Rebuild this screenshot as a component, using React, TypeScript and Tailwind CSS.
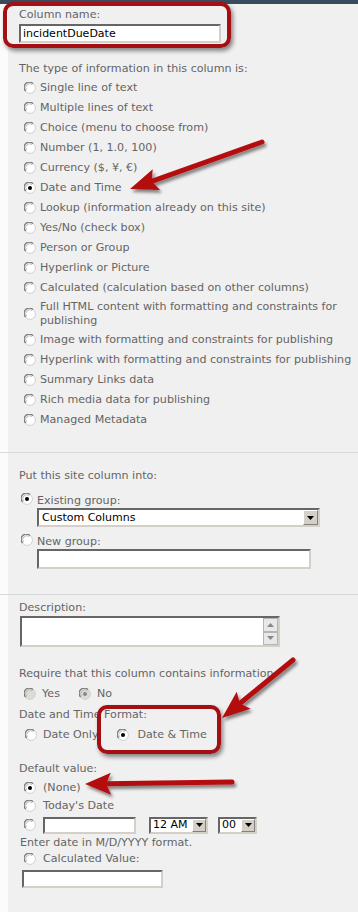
import type { ReactNode } from "react";

const font = "font-['DejaVu_Sans',Verdana,sans-serif]";

function Radio({ checked = false, disabled = false }: { checked?: boolean; disabled?: boolean }) {
  return (
    <svg width="12" height="12" viewBox="0 0 12 12" className="shrink-0">
      <circle cx="6" cy="6" r="5.4" fill={disabled ? "#dddbd6" : "#ffffff"} stroke="#d0d0d0" strokeWidth="1" />
      <path d="M1.6 9 A5 5 0 0 1 9 1.6" stroke="#7c7c7c" strokeWidth="1.3" fill="none" />
      <path d="M2.6 8.2 A4 4 0 0 1 8.2 2.6" stroke="#b8b8b8" strokeWidth="0.9" fill="none" />
      {checked && <circle cx="6" cy="6" r="2" fill={disabled ? "#8a8a8a" : "#000"} />}
    </svg>
  );
}

function DropButton({ className = "" }: { className?: string }) {
  return (
    <div
      className={`flex items-center justify-center bg-[#d4d0c8] border border-t-white border-l-white border-b-[#808080] border-r-[#808080] ${className}`}
    >
      <svg width="7" height="4" viewBox="0 0 7 4">
        <path d="M0 0 H7 L3.5 4 Z" fill="#000" />
      </svg>
    </div>
  );
}

function TextBox({ className = "", children }: { className?: string; children?: ReactNode }) {
  return (
    <div
      className={`bg-white border-2 border-t-[#666] border-l-[#666] border-b-[#d4d0c8] border-r-[#d4d0c8] text-black ${className}`}
    >
      {children}
    </div>
  );
}

const types = [
  "Single line of text",
  "Multiple lines of text",
  "Choice (menu to choose from)",
  "Number (1, 1.0, 100)",
  "Currency ($, ¥, €)",
  "Date and Time",
  "Lookup (information already on this site)",
  "Yes/No (check box)",
  "Person or Group",
  "Hyperlink or Picture",
  "Calculated (calculation based on other columns)",
];

const types2 = [
  "Image with formatting and constraints for publishing",
  "Hyperlink with formatting and constraints for publishing",
  "Summary Links data",
  "Rich media data for publishing",
  "Managed Metadata",
];

type Pt = [number, number];

function Arrow({ tail, tip, len = 28, half = 11 }: { tail: Pt; tip: Pt; len?: number; half?: number }) {
  const dx = tip[0] - tail[0];
  const dy = tip[1] - tail[1];
  const d = Math.hypot(dx, dy);
  const ux = dx / d;
  const uy = dy / d;
  const nx = -uy;
  const ny = ux;
  const bx = tip[0] - ux * len;
  const by = tip[1] - uy * len;
  const nbx = tip[0] - ux * (len - 5);
  const nby = tip[1] - uy * (len - 5);
  const head = `${tip[0]},${tip[1]} ${bx + nx * half},${by + ny * half} ${nbx},${nby} ${bx - nx * half},${by - ny * half}`;
  return (
    <g filter="url(#shadow)">
      <line x1={tail[0]} y1={tail[1]} x2={nbx} y2={nby} stroke="#b30c10" strokeWidth="5" strokeLinecap="round" />
      <polygon points={head} fill="#b30c10" />
    </g>
  );
}

export default function App() {
  return (
    <div className={`relative w-[358px] h-[912px] overflow-hidden bg-[#fbfbfb] text-[11.1px] leading-[14px] text-[#646464] ${font}`}>
      <div className="h-[4px] bg-[#3b4b5f]" />

      {/* column name + type */}
      <section className="ml-[8px] h-[448px] bg-[#f0f0f0] pl-[11px] pt-[4px]">
        <div>Column name:</div>
        <TextBox className="mt-[2px] w-[202px] h-[19px] pl-[2px] flex items-center text-[11px]">incidentDueDate</TextBox>
        <div className="mt-[19px]">The type of information in this column is:</div>
        <div className="mt-[2px]">
          {types.map((t) => (
            <div key={t} className="flex items-center h-[20px] pl-[5px] gap-[4px]">
              <Radio checked={t === "Date and Time"} />
              <span>{t}</span>
            </div>
          ))}
          <div className="flex items-center h-[32px] pl-[5px] gap-[4px]">
            <Radio />
            <span>
              Full HTML content with formatting and constraints for
              <br />
              publishing
            </span>
          </div>
          {types2.map((t) => (
            <div key={t} className="flex items-center h-[20px] pl-[5px] gap-[4px] whitespace-nowrap">
              <Radio />
              <span>{t}</span>
            </div>
          ))}
        </div>
      </section>

      <div className="h-px bg-[#d9d9d9]" />

      {/* group */}
      <section className="ml-[8px] h-[141px] bg-[#f0f0f0] pl-[11px] pt-[16px]">
        <div>Put this site column into:</div>
        <div className="mt-[7px] flex items-center h-[18px] pl-[2px] gap-[4px]">
          <Radio checked />
          <span className="mt-[3px]">Existing group:</span>
        </div>
        <div className="ml-[18px] w-[283px] h-[19px] flex items-center bg-white border-2 border-t-[#666] border-l-[#666] border-b-[#d4d0c8] border-r-[#d4d0c8] text-black text-[11px]">
          <span className="flex-1 pl-[3px]">Custom Columns</span>
          <DropButton className="w-[15px] h-[15px]" />
        </div>
        <div className="mt-[4px] flex items-center h-[18px] pl-[2px] gap-[4px]">
          <Radio />
          <span className="mt-[3px]">New group:</span>
        </div>
        <TextBox className="ml-[18px] w-[274px] h-[20px]" />
      </section>

      <div className="h-px bg-[#d9d9d9]" />

      {/* description + settings */}
      <section className="ml-[8px] h-[317px] bg-[#f0f0f0] pl-[11px] pt-[6px]">
        <div>Description:</div>
        <div className="mt-[1px] ml-[1px] w-[260px] h-[31px] flex bg-white border-2 border-t-[#666] border-l-[#666] border-b-[#d4d0c8] border-r-[#d4d0c8]">
          <div className="flex-1" />
          <div className="w-[15px] flex flex-col bg-[#eeeeee]">
            <div className="flex-1 flex items-center justify-center bg-[#e8e8e8] border border-[#b5b5b5]">
              <svg width="7" height="4" viewBox="0 0 7 4">
                <path d="M0 4 H7 L3.5 0 Z" fill="#888" />
              </svg>
            </div>
            <div className="flex-1 flex items-center justify-center bg-[#e8e8e8] border border-[#b5b5b5]">
              <svg width="7" height="4" viewBox="0 0 7 4">
                <path d="M0 0 H7 L3.5 4 Z" fill="#888" />
              </svg>
            </div>
          </div>
        </div>

        <div className="mt-[20px] whitespace-nowrap">Require that this column contains information:</div>
        <div className="mt-[3px] h-[20px] flex items-center pl-[5px]">
          <Radio disabled />
          <span className="ml-[6px]">Yes</span>
          <span className="ml-[19px]">
            <Radio checked disabled />
          </span>
          <span className="ml-[6px]">No</span>
        </div>

        <div className="mt-[4px]">Date and Time Format:</div>
        <div className="mt-[3px] h-[20px] flex items-center pl-[6px]">
          <Radio />
          <span className="ml-[6px]">Date Only</span>
          <span className="ml-[19px]">
            <Radio checked />
          </span>
          <span className="ml-[8px]">Date &amp; Time</span>
        </div>

        <div className="mt-[17px]">Default value:</div>
        <div className="mt-[3px] h-[18px] flex items-center pl-[5px] gap-[7px]">
          <Radio checked />
          <span>(None)</span>
        </div>
        <div className="h-[18px] flex items-center pl-[5px] gap-[7px]">
          <Radio />
          <span>Today's Date</span>
        </div>
        <div className="h-[20px] flex items-center pl-[5px]">
          <Radio />
          <TextBox className="ml-[7px] w-[93px] h-[17px]" />
          <div className="ml-[13px] w-[59px] h-[17px] flex items-center bg-white border-2 border-t-[#666] border-l-[#666] border-b-[#d4d0c8] border-r-[#d4d0c8] text-black text-[11px]">
            <span className="flex-1 pl-[2px]">12 AM</span>
            <DropButton className="w-[14px] h-[13px]" />
          </div>
          <div className="ml-[10px] w-[39px] h-[17px] flex items-center bg-white border-2 border-t-[#666] border-l-[#666] border-b-[#d4d0c8] border-r-[#d4d0c8] text-black text-[11px]">
            <span className="flex-1 pl-[2px]">00</span>
            <DropButton className="w-[14px] h-[13px]" />
          </div>
        </div>
        <div className="mt-[1px] ml-[1px]">Enter date in M/D/YYYY format.</div>
        <div className="h-[18px] flex items-center pl-[5px] gap-[7px]">
          <Radio />
          <span>Calculated Value:</span>
        </div>
        <TextBox className="mt-[2px] ml-[3px] w-[141px] h-[18px]" />
      </section>

      {/* annotations */}
      <div className="absolute left-[3px] top-[2px] w-[228px] h-[46px] rounded-[10px] border-[4px] border-[#a50e13] shadow-[2px_3px_4px_rgba(0,0,0,0.45)]" />
      <div className="absolute left-[97px] top-[705px] w-[124px] h-[49px] rounded-[10px] border-[4px] border-[#a50e13] shadow-[2px_3px_4px_rgba(0,0,0,0.45)]" />
      <svg className="absolute left-0 top-0 pointer-events-none" width="358" height="912">
        <defs>
          <filter id="shadow" x="-20%" y="-20%" width="140%" height="140%">
            <feDropShadow dx="2" dy="3" stdDeviation="1.8" floodColor="#000" floodOpacity="0.45" />
          </filter>
        </defs>
        <Arrow tail={[262, 142]} tip={[130, 189]} />
        <Arrow tail={[293, 660]} tip={[222, 718]} />
        <Arrow tail={[232, 782]} tip={[85, 784]} len={26} half={11} />
      </svg>
    </div>
  );
}
